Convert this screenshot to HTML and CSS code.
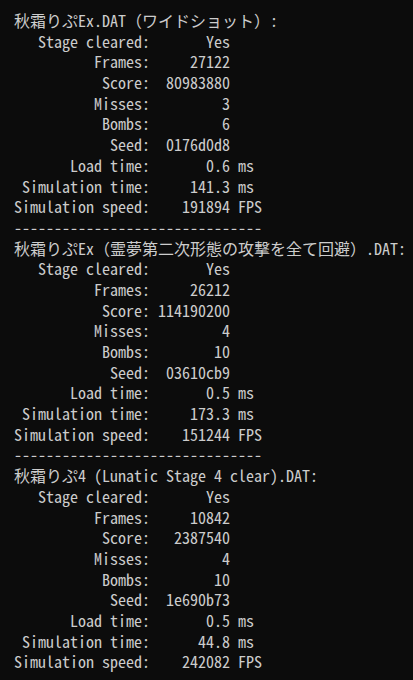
FILE: index.html
```html
<!DOCTYPE html>
<html lang="ja">
<head>
<meta charset="utf-8">
<title>Replay results</title>
<link rel="stylesheet" href="styles.css">
</head>
<body>
<pre class="console">秋霜りぷEx.DAT（ワイドショット）:
   Stage cleared:       Yes
          Frames:     27122
           Score:  80983880
          Misses:         3
           Bombs:         6
            Seed:  0176d0d8
       Load time:       0.6 ms
 Simulation time:     141.3 ms
Simulation speed:    191894 FPS
-------------------------------
秋霜りぷEx（霊夢第二次形態の攻撃を全て回避）.DAT:
   Stage cleared:       Yes
          Frames:     26212
           Score: 114190200
          Misses:         4
           Bombs:        10
            Seed:  03610cb9
       Load time:       0.5 ms
 Simulation time:     173.3 ms
Simulation speed:    151244 FPS
-------------------------------
秋霜りぷ4 (Lunatic Stage 4 clear).DAT:
   Stage cleared:       Yes
          Frames:     10842
           Score:   2387540
          Misses:         4
           Bombs:        10
            Seed:  1e690b73
       Load time:       0.5 ms
 Simulation time:      44.8 ms
Simulation speed:    242082 FPS</pre>
</body>
</html>
```
FILE: styles.css
```css
html, body {
  margin: 0;
  padding: 0;
  background: #0c0c0c;
}
body {
  width: 413px;
  height: 680px;
  overflow: hidden;
}
.console {
  margin: 0;
  padding: 10px 0 0 14px;
  font-family: "Noto Sans Mono CJK JP", "DejaVu Sans Mono", monospace;
  font-size: 16px;
  line-height: 20.68px;
  color: #cccccc;
  white-space: pre;
}
```
